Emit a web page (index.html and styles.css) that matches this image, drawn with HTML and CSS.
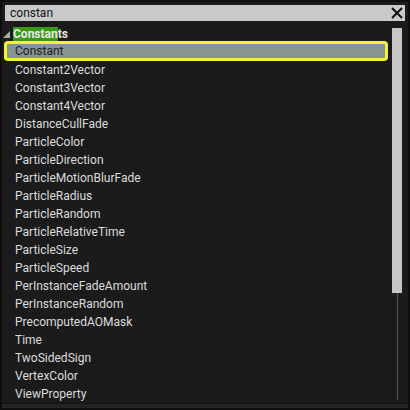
FILE: index.html
```html
<!DOCTYPE html>
<html lang="en">
<head>
    <meta charset="UTF-8">
    <title>Palette search</title>
    <link rel="stylesheet" href="styles.css">
</head>
<body>
    <div class="panel">
        <div class="search">
            <span class="search-text">constan</span>
            <svg class="clear" width="12" height="12" viewBox="0 0 12 12">
                <path d="M1 1 L11 11 M11 1 L1 11" stroke="#111" stroke-width="2" fill="none"/>
            </svg>
        </div>
        <div class="body">
            <ul class="list">
                <li class="category">
                    <svg class="arrow" width="7" height="7" viewBox="0 0 7 7"><polygon points="7,0 7,7 0,7" fill="#a8a8a8"/></svg>
                    <span class="match">Constan</span><span>ts</span>
                </li>
                <li class="item selected">Constant</li>
                <li class="item">Constant2Vector</li>
                <li class="item">Constant3Vector</li>
                <li class="item">Constant4Vector</li>
                <li class="item">DistanceCullFade</li>
                <li class="item">ParticleColor</li>
                <li class="item">ParticleDirection</li>
                <li class="item">ParticleMotionBlurFade</li>
                <li class="item">ParticleRadius</li>
                <li class="item">ParticleRandom</li>
                <li class="item">ParticleRelativeTime</li>
                <li class="item">ParticleSize</li>
                <li class="item">ParticleSpeed</li>
                <li class="item">PerInstanceFadeAmount</li>
                <li class="item">PerInstanceRandom</li>
                <li class="item">PrecomputedAOMask</li>
                <li class="item">Time</li>
                <li class="item">TwoSidedSign</li>
                <li class="item">VertexColor</li>
                <li class="item">ViewProperty</li>
            </ul>
            <div class="scrollbar">
                <div class="thumb"></div>
                <div class="track"></div>
            </div>
        </div>
        <div class="bottom-shade"></div>
    </div>
</body>
</html>
```

FILE: styles.css
```css
body {
    margin: 0;
    padding: 0;
    background: #0e0e0e;
    font-family: Roboto, 'Liberation Sans', sans-serif;
}
.panel {
    width: 406px;
    height: 406px;
    margin: 2px;
    background: #1b1b1b;
    display: flex;
    flex-direction: column;
    box-sizing: border-box;
}
.search {
    margin: 3px 0 0 3px;
    width: 400px;
    height: 16px;
    background: #c9c9c9;
    display: flex;
    align-items: center;
    justify-content: space-between;
    box-sizing: border-box;
    padding: 0 2px 0 5px;
}
.search-text {
    color: #141414;
    font-size: 12px;
}
.clear {
    display: block;
}
.body {
    display: flex;
    flex: 1;
    margin-top: 3px;
}
.list {
    list-style: none;
    margin: 0;
    padding: 0;
    width: 388px;
}
.list li {
    height: 18px;
    line-height: 18px;
    font-size: 12px;
    color: #dcdcdc;
    white-space: nowrap;
}
.list .category {
    display: flex;
    align-items: center;
    font-weight: bold;
    color: #e8e8e8;
    height: 16px;
    padding-top: 2px;
}
.arrow {
    margin: 0 3px 0 1px;
}
.match {
    background: #3a9a17;
    line-height: 14px;
}
.item {
    padding-left: 13px;
}
.list .selected {
    background: #869492;
    border: 3px solid #f2f23c;
    border-radius: 4px;
    height: 14px;
    line-height: 14px;
    padding-left: 8px;
    margin: -1px 0 0 2px;
    color: #1c1c1c;
    width: 370px;
}
.scrollbar {
    width: 10px;
    margin-left: 2px;
    display: flex;
    flex-direction: column;
    align-items: center;
}
.thumb {
    width: 10px;
    height: 265px;
    margin-top: 4px;
    background: #c6c6c6;
}
.track {
    width: 1px;
    flex: 1;
    background: #555;
    margin-bottom: 3px;
}
.bottom-shade {
    height: 4px;
    background: #242424;
    border-top: 1px solid #111;
}
```
